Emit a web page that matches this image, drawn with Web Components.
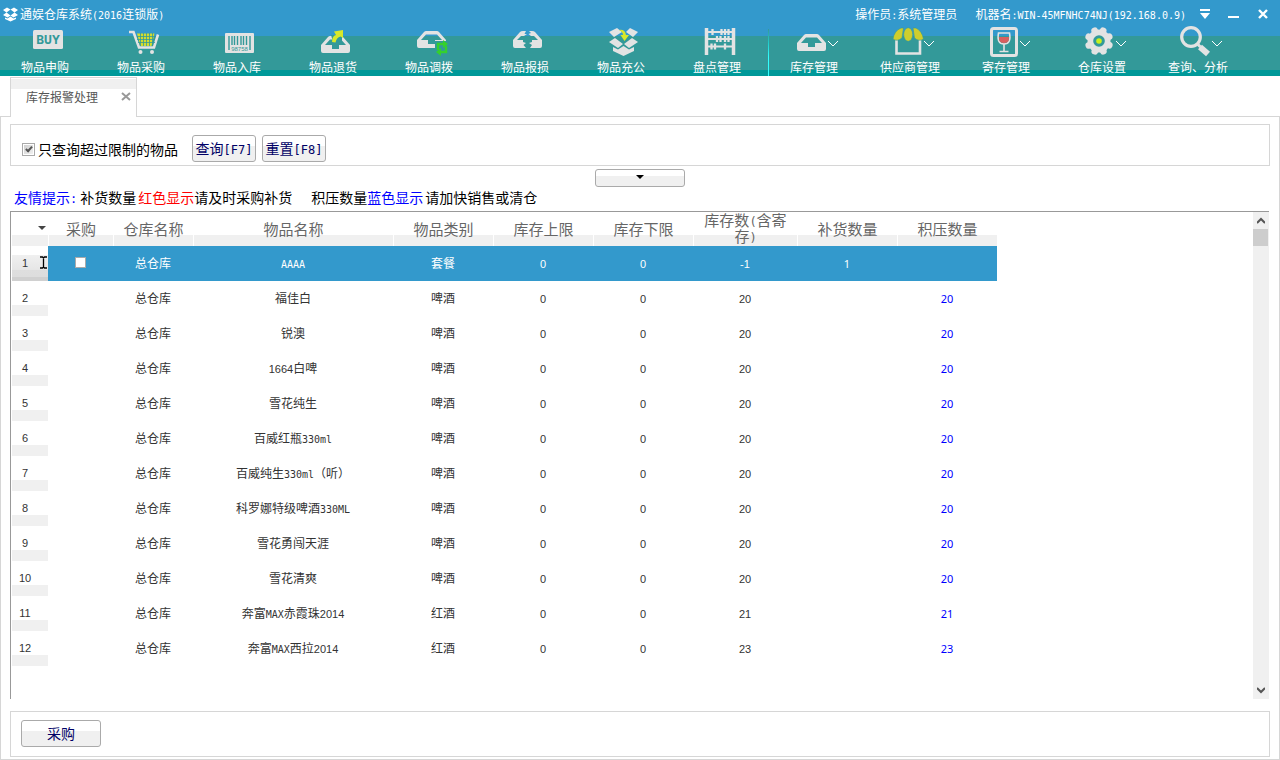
<!DOCTYPE html>
<html lang="zh-CN">
<head>
<meta charset="utf-8">
<title>通娱仓库系统(2016连锁版)</title>
<style>
  html, body { height: 100%; margin: 0; }
  body { font: 12px/16px "Noto Sans CJK SC", "Noto Sans", sans-serif; color: #333; background: #fff; }
</style>
</head>
<body>
<stock-app></stock-app>
<script>
const BASE = `
  *, *::before, *::after { box-sizing: border-box; }
  .l, .lm { font-family: "DejaVu Sans Mono", monospace; font-size: 10px; line-height: 1; }
  .lm { font-size: 12px; }
  .d { font-family: "Liberation Sans", sans-serif; font-size: 11px; line-height: 1; }
  svg { display: block; }
  button { font: inherit; color: inherit; background: none; border: 0; padding: 0; margin: 0; }
`;
// Half-width characters are set in a face half as wide as a CJK character; plain numbers get undotted zeros.
const latin = (text, cls = 'l') => text.replace(/[\x21-\x7e]+/g,
  m => `<span class="${/^[-\d]+$/.test(m) ? 'd' : cls}">${m}</span>`);

function define(name, render) {
  customElements.define(name, class extends HTMLElement {
    connectedCallback() {
      if (this.shadowRoot) return;
      const root = this.attachShadow({ mode: 'open' });
      const t = document.createElement('template');
      t.innerHTML = render(this);
      root.append(t.content.cloneNode(true));
    }
  });
}

const TRAY = 'M1 15L8 7Q9 6 10 6H21Q22 6 23 7L30 15V21Q30 23 28 23H3Q1 23 1 21ZM5 15H12V19H19V15H26L21 9.500H10Z';
const ICONS = {
  buy: `<rect x="1" y="5" width="30" height="19" rx="1.500" fill="#e3e3e3"/>
    <text x="16" y="19" text-anchor="middle" font-family="DejaVu Sans Mono" font-weight="bold" font-size="13" fill="#399">BUY</text>`,
  cart: `<path d="M1 7H5.500L11 22.500H26L30 9.500" fill="none" stroke="#e3e3e3" stroke-width="2.600"/>
    <path d="M9 8.500h17.500l-3 12.500h-11z" fill="#d3dc2e"/>
    <path d="M9 11.500h19M9 14.500h18M10 17.500h17M12.500 8v13M15.500 8v13M18.500 8v13M21.500 8v13M24.500 8v11" stroke="#399" stroke-width=".8"/>
    <circle cx="12.500" cy="27" r="2" fill="#e3e3e3"/><circle cx="24" cy="27" r="2" fill="#e3e3e3"/>`,
  barcode: `<rect x="1" y="8" width="29" height="20" rx="1" fill="#e3e3e3"/>
    <path d="M5 11v14M8 11v9M10.500 11v9M13.500 11v9M17 11v9M19.500 11v9M22.500 11v9M26 11v14" stroke="#399" stroke-width="1.400"/>
    <text x="15.500" y="26" text-anchor="middle" font-family="Liberation Sans" font-size="6" fill="#399">98758</text>`,
  refund: `<g transform="translate(0 5)"><path fill-rule="evenodd" fill="#e3e3e3" d="${TRAY}"/></g>
    <path d="M11 10h11v7h-9z" fill="#399"/><path d="M12 17q0-6 4-7l-2-3.500 9-1.500v8l-2.500-1.500q-4 1-5 6z" fill="#d8e82a"/>`,
  transfer: `<path fill-rule="evenodd" fill="#e3e3e3" d="${TRAY}"/><path d="M19 16h13v14H19z" fill="#399"/>
    <path d="M22 25v-6h6M30 21v6h-6" fill="none" stroke="#35d02c" stroke-width="2.400"/>
    <path d="M27 15l5 4-5 4zM25 23l-5 4 5 4z" fill="#35d02c"/>`,
  damage: `<path fill="#e3e3e3" d="M1 15L8 7Q9 6 11 6H14L12.500 9H15L12 11H9L5 15H11V17L14 18L11.500 20L14 23H3Q1 23 1 21ZM30 15L23 7Q22 6 20 6H17L19 8L16.500 9L19 11H22L26 15H20V17L17 18L20 20L18 23H28Q30 23 30 21Z"/>`,
  box: `<path fill="#e3e3e3" d="M1 7L9 3L14 7L6 12ZM30 7L22 3L18 7L25 12ZM1 17L7 13L15 19L10 23ZM30 17L24 13L16 19L21 23ZM5 22L10 24.500L15.500 21L21 24.500L26 22V26L15.500 31L5 26Z"/>
    <path d="M11 5q6-1 7 5h3l-4.500 6-4-6h2.500q0-3-4-5z" fill="#d8e82a"/>`,
  abacus: `<path d="M2.500 3v27M29.500 3v27" stroke="#e3e3e3" stroke-width="3.500"/>
    <path d="M3 7h26M3 14h26M3 21.500h26" stroke="#e3e3e3" stroke-width="2.200"/>
    <path d="M8.500 4v6M17.500 4v6M21 4v6M24.500 4v6M13 11v6M16.500 11v6M21 11v6M24.500 11v6M7.500 18.500v6M11 18.500v6M21 18.500v6" stroke="#e3e3e3" stroke-width="2.300"/>`,
  stock: `<g transform="translate(0 3)"><path fill-rule="evenodd" fill="#e3e3e3" d="${TRAY}"/></g>`,
  shop: `<path d="M4.500 15V28.500H28V15" fill="none" stroke="#e3e3e3" stroke-width="2.600"/>
    <g fill="#cfce2c" stroke="#399" stroke-width=".6"><path d="M1 14Q2 6 9 3H11.500L10 13Q5 17 1 14Z"/><ellipse cx="16.200" cy="9.500" rx="4.500" ry="6.800"/><path d="M31.500 14Q30 6 24 3H21L22.500 13Q27 17 31.500 14Z"/></g>`,
  wine: `<rect x="3.500" y="3.500" width="25" height="27" rx="2" fill="none" stroke="#e3e3e3" stroke-width="3"/>
    <path d="M10.500 8h11q2 11-5.500 11t-5.500-11zM16 19v7.500M11.500 26.500h9" fill="none" stroke="#e3e3e3" stroke-width="1.600"/>
    <path d="M11 12h10q.5 6-5 6t-5-6z" fill="#d75f5f"/>`,
  gear: `<g fill="#e3e3e3"><circle cx="15" cy="16" r="11.500"/>
    ${[22, 67, 112, 157, 202, 247, 292, 337].map(a => `<circle cx="15" cy="5" r="3.400" transform="rotate(${a} 15 16)"/>`).join('')}</g>
    <circle cx="15" cy="16" r="5.800" fill="#399"/><circle cx="15" cy="16" r="2.800" fill="#c8f01e"/>`,
  search: `<circle cx="11" cy="12" r="9.300" fill="none" stroke="#e3e3e3" stroke-width="3.200"/>
    <path d="M17.500 19l3 3" stroke="#e3e3e3" stroke-width="3"/><path d="M20 22l8 7" stroke="#e3e3e3" stroke-width="6"/>`
};

define('title-bar', () => `
  <style>${BASE}
    :host { display: flex; align-items: center; height: 25px; padding: 3px 11px 0 3px; color: #fff; }
    .name { margin-left: 2px; flex: 1; }
    .user { margin-right: 18px; }
    .controls { display: flex; gap: 17px; margin-left: 13px; }
    .controls button { width: 12px; height: 14px; }
  </style>
  <svg width="15" height="16" viewBox="0 0 30 30" fill="#fff"><path d="M0 7L8 2L15 6L7 12ZM30 7L22 2L15 6L23 12ZM0 17L7 12L15 18L9 22ZM30 17L23 12L15 18L21 22ZM4 22L9 24L15 20L21 24L26 22V25L15 30L4 25Z"/></svg>
  <span class="name">${latin('通娱仓库系统(2016连锁版)')}</span>
  <span class="user">${latin('操作员:系统管理员')}</span>
  <span>${latin('机器名:WIN-45MFNHC74NJ(192.168.0.9)')}</span>
  <div class="controls">
    <button aria-label="菜单"><svg width="12" height="14"><path d="M1 2h10v2H1zM1 6h10l-5 6z" fill="#fff"/></svg></button>
    <button aria-label="最小化"><svg width="12" height="14"><path d="M0 9h11v2H0z" fill="#fff"/></svg></button>
    <button aria-label="关闭"><svg width="12" height="14"><path d="M2 3l8 8M10 3l-8 8" stroke="#fff" stroke-width="2.400"/></svg></button>
  </div>`);

define('tool-button', el => `
  <style>${BASE}
    :host { display: block; flex: none; width: 96px; }
    button { display: flex; flex-direction: column; gap: 2px; width: 100%; color: #fff; }
    .icon { display: flex; justify-content: center; width: 100%; }
    .label { width: 100%; padding-right: 6px; text-align: center; line-height: 16px; }
  </style>
  <button>
    <span class="icon"><svg width="32" height="32" viewBox="0 0 32 32">${ICONS[el.getAttribute('icon')]}</svg>
    ${el.hasAttribute('menu') ? '<svg width="10" height="32"><path d="M0 16l5 5 5-5" fill="none" stroke="#fff"/></svg>' : ''}</span>
    <span class="label"><slot></slot></span>
  </button>`);

define('tool-bar', () => `
  <style>${BASE}
    :host { display: flex; height: 51px; overflow: hidden; }
    .sep { flex: none; width: 1px; margin-top: 4px; background: linear-gradient(#399 0, #2cc 30%, #3ff 60%); }
  </style>
  <tool-button icon="buy">物品申购</tool-button>
  <tool-button icon="cart">物品采购</tool-button>
  <tool-button icon="barcode">物品入库</tool-button>
  <tool-button icon="refund">物品退货</tool-button>
  <tool-button icon="transfer">物品调拨</tool-button>
  <tool-button icon="damage">物品报损</tool-button>
  <tool-button icon="box">物品充公</tool-button>
  <tool-button icon="abacus">盘点管理</tool-button>
  <span class="sep"></span>
  <tool-button icon="stock" menu>库存管理</tool-button>
  <tool-button icon="shop" menu>供应商管理</tool-button>
  <tool-button icon="wine" menu>寄存管理</tool-button>
  <tool-button icon="gear" menu>仓库设置</tool-button>
  <tool-button icon="search" menu>查询、分析</tool-button>`);

define('page-tab', () => `
  <style>${BASE}
    :host { display: flex; align-items: center; justify-content: space-between; width: 127px; height: 40px; box-sizing: border-box;
      padding: 0 5px 2px 15px; color: #555; border: 1px solid #d6d6d6; border-bottom: 0;
      background: linear-gradient(#fff 1px, #f0f0f0 1px, #f0f0f0 11px, #fff 11px); }
    button { width: 10px; height: 10px; }
  </style>
  <span><slot></slot></span>
  <button aria-label="关闭标签"><svg width="10" height="10"><path d="M1 1l8 7M9 1L1 8" stroke="#999" stroke-width="2"/></svg></button>`);

define('framed-panel', () => `
  <style>${BASE}
    :host { display: flex; align-items: flex-start; flex: none; padding: 8px 10px; border: 1px solid #d6d6d6; box-sizing: border-box; }
  </style><slot></slot>`);

define('push-button', el => `
  <style>${BASE}
    :host { display: block; height: 27px; }
    button { width: 100%; height: 100%; padding-bottom: 2px; font-size: 14px; line-height: 20px; color: #006; border: 1px solid #aaa; border-radius: 3px;
      background: linear-gradient(#fff 40%, #f0f0f0 40%); white-space: nowrap; display: flex; align-items: center; justify-content: center; }
  </style>
  <button aria-label="${el.getAttribute('label') || el.textContent.trim()}"><span><slot></slot></span></button>`);

define('check-field', () => `
  <style>${BASE}
    :host { display: block; }
    label { display: flex; align-items: center; gap: 3px; font-size: 14px; line-height: 20px; color: #000; }
    input { appearance: none; width: 13px; height: 13px; margin: 0; border: 1px solid #aaa; box-shadow: inset 0 0 0 1px #fff;
      background: linear-gradient(135deg, #ccc, #f4f4f4); display: grid; place-items: center; }
    input:checked::before { content: ""; width: 4px; height: 7px; margin-bottom: 2px; border: solid #555; border-width: 0 2px 2px 0; transform: rotate(42deg); }
  </style>
  <label><input type="checkbox" checked><slot></slot></label>`);

define('hint-line', () => `
  <style>${BASE}
    :host { display: flex; flex: none; gap: 2px; height: 22px; padding-left: 4px; font-size: 14px; line-height: 20px; color: #000; white-space: nowrap; }
    .b { color: #00f; } .r { color: #f00; }
    .tip { margin-right: 1px; }
    .next { margin-left: 17px; }
  </style>
  <span class="b tip">${latin('友情提示:', 'lm')}</span>
  <span>补货数量</span><span><span class="r">红色显示</span>请及时采购补货</span>
  <span class="next">积压数量<span class="b">蓝色显示</span></span><span>请加快销售或清仓</span>`);

define('scroll-strip', () => `
  <style>${BASE}
    :host { display: flex; flex-direction: column; flex: none; width: 16px; background: #f0f0f0; }
    button { height: 17px; display: grid; place-items: center; }
    .track { flex: 1; } .thumb { height: 17px; margin-right: 1px; background: #cdcdcd; }
  </style>
  <button aria-label="向上滚动"><svg width="8" height="7"><path d="M0 6l4-4 4 4" fill="none" stroke="#555" stroke-width="2"/></svg></button>
  <div class="track"><div class="thumb"></div></div>
  <button aria-label="向下滚动"><svg width="8" height="7"><path d="M0 1l4 4 4-4" fill="none" stroke="#555" stroke-width="2"/></svg></button>`);

const COLUMNS = [['采购', 65], ['仓库名称', 80], ['物品名称', 200], ['物品类别', 100], ['库存上限', 100],
  ['库存下限', 100], ['库存数(含寄存)', 104], ['补货数量', 100], ['积压数量', 100]];
const ITEMS = [['AAAA', '套餐', -1, 1, ''], ['福佳白', '啤酒', 20, '', 20], ['锐澳', '啤酒', 20, '', 20],
  ['1664白啤', '啤酒', 20, '', 20], ['雪花纯生', '啤酒', 20, '', 20], ['百威红瓶330ml', '啤酒', 20, '', 20],
  ['百威纯生330ml（听）', '啤酒', 20, '', 20], ['科罗娜特级啤酒330ML', '啤酒', 20, '', 20], ['雪花勇闯天涯', '啤酒', 20, '', 20],
  ['雪花清爽', '啤酒', 20, '', 20], ['奔富MAX赤霞珠2014', '红酒', 21, '', 21], ['奔富MAX西拉2014', '红酒', 23, '', 23]];

define('stock-grid', () => `
  <style>${BASE}
    :host { display: flex; flex: 1; min-height: 0; border: solid #999; border-width: 1px 0 0 1px; overflow: hidden; }
    .body { flex: 1; min-width: 0; overflow: hidden; padding-left: 1px; }
    table { table-layout: fixed; width: 985px; border-collapse: separate; border-spacing: 0; text-align: center; }
    th, td { padding: 0; font-weight: normal; }
    thead th { height: 34px; padding: 0 8px 2px; font-size: 15px; line-height: 15px; color: #666; border-left: 1px solid #fff;
      background: linear-gradient(#fff 23px, #f0f0f0 23px); }
    thead th:first-child { border: 0; padding: 0 2px 0 0; }
    thead svg { margin-left: auto; margin-bottom: 3px; }
    tbody td, tbody th { height: 35px; padding-bottom: 2px; line-height: 16px; }
    tbody th { padding-left: 7px; background: linear-gradient(#fff 24px, #f0f0f0 24px); }
    .sel td { background: #39c; color: #fff; }
    .sel th { background: linear-gradient(#fff 9px, #f0f0f0 9px, #e6e6e6 24px, #dedede 24px, #ddd 31px, #d0d0d0 31px); }
    .head { display: flex; align-items: center; }
    .head .d { width: 12px; white-space: nowrap; line-height: 16px; }
    .head svg { margin-left: auto; margin-right: 1px; }
    input { appearance: none; display: block; width: 11px; height: 11px; margin: 0 auto; background: #fff; border: 1px solid #aaa; }
    td.t { padding-bottom: 0; font: 11px/16px "Noto Sans", sans-serif; }
    .over { color: #00f; }
  </style>
  <div class="body"><table>
    <colgroup><col style="width:36px">${COLUMNS.map(c => `<col style="width:${c[1]}px">`).join('')}</colgroup>
    <thead><tr><th aria-label="行"><svg width="8" height="4"><path d="M0 0h8l-4 4z" fill="#444"/></svg></th>
      ${COLUMNS.map(c => `<th scope="col">${latin(c[0], 'lm')}</th>`).join('')}</tr></thead>
    <tbody>${ITEMS.map(([name, kind, n, need, over], i) => `
      <tr${i ? '' : ' class="sel"'}>
        <th scope="row"><div class="head"><span class="d">${i + 1}</span>${i ? '' :
          '<svg width="7" height="13"><path d="M0 1h2.500l1 1 1-1H7M3.500 1v11M0 12h2.500l1-1 1 1H7" fill="none" stroke="#000" stroke-width="1.300"/></svg>'}</div></th>
        <td>${i ? '' : '<input type="checkbox" aria-label="采购">'}</td>
        <td>总仓库</td><td>${latin(name)}</td><td>${kind}</td><td>${latin('0')}</td><td>${latin('0')}</td>
        <td>${latin(String(n))}</td><td class="t">${need}</td><td class="t over">${over}</td>
      </tr>`).join('')}</tbody>
  </table></div>
  <scroll-strip></scroll-strip>`);

define('stock-app', () => `
  <style>${BASE}
    :host { display: flex; flex-direction: column; height: 100vh; }
    header { flex: none; background: linear-gradient(#39c 36px, #399 36px, #399 70px, #099 70px); }
    nav { flex: none; padding: 1px 10px 0; margin-bottom: -1px; position: relative; z-index: 1; }
    main { flex: 1; min-height: 0; display: flex; flex-direction: column; padding: 7px 9px 2px; border: 1px solid #d6d6d6; }
    .query { height: 42px; padding: 10px 11px 0; }
    check-field { margin-right: 14px; padding-top: 4px; }
    .query push-button { width: 64px; margin-right: 6px; }
    .fold { width: 90px; height: 18px; margin: 3px auto 0; flex: none; }
    stock-grid { margin: 2px 1px 12px 0; }
    .actions { height: 46px; }
    .actions push-button { width: 80px; }
  </style>
  <header><title-bar></title-bar><tool-bar></tool-bar></header>
  <nav><page-tab>库存报警处理</page-tab></nav>
  <main>
    <framed-panel class="query">
      <check-field>只查询超过限制的物品</check-field>
      <push-button>${latin('查询[F7]', 'lm')}</push-button>
      <push-button>${latin('重置[F8]', 'lm')}</push-button>
    </framed-panel>
    <push-button class="fold" label="折叠"><svg width="8" height="4"><path d="M0 0h8l-4 4z" fill="#000"/></svg></push-button>
    <hint-line></hint-line>
    <stock-grid></stock-grid>
    <framed-panel class="actions"><push-button>采购</push-button></framed-panel>
  </main>`);
</script>
</body>
</html>
